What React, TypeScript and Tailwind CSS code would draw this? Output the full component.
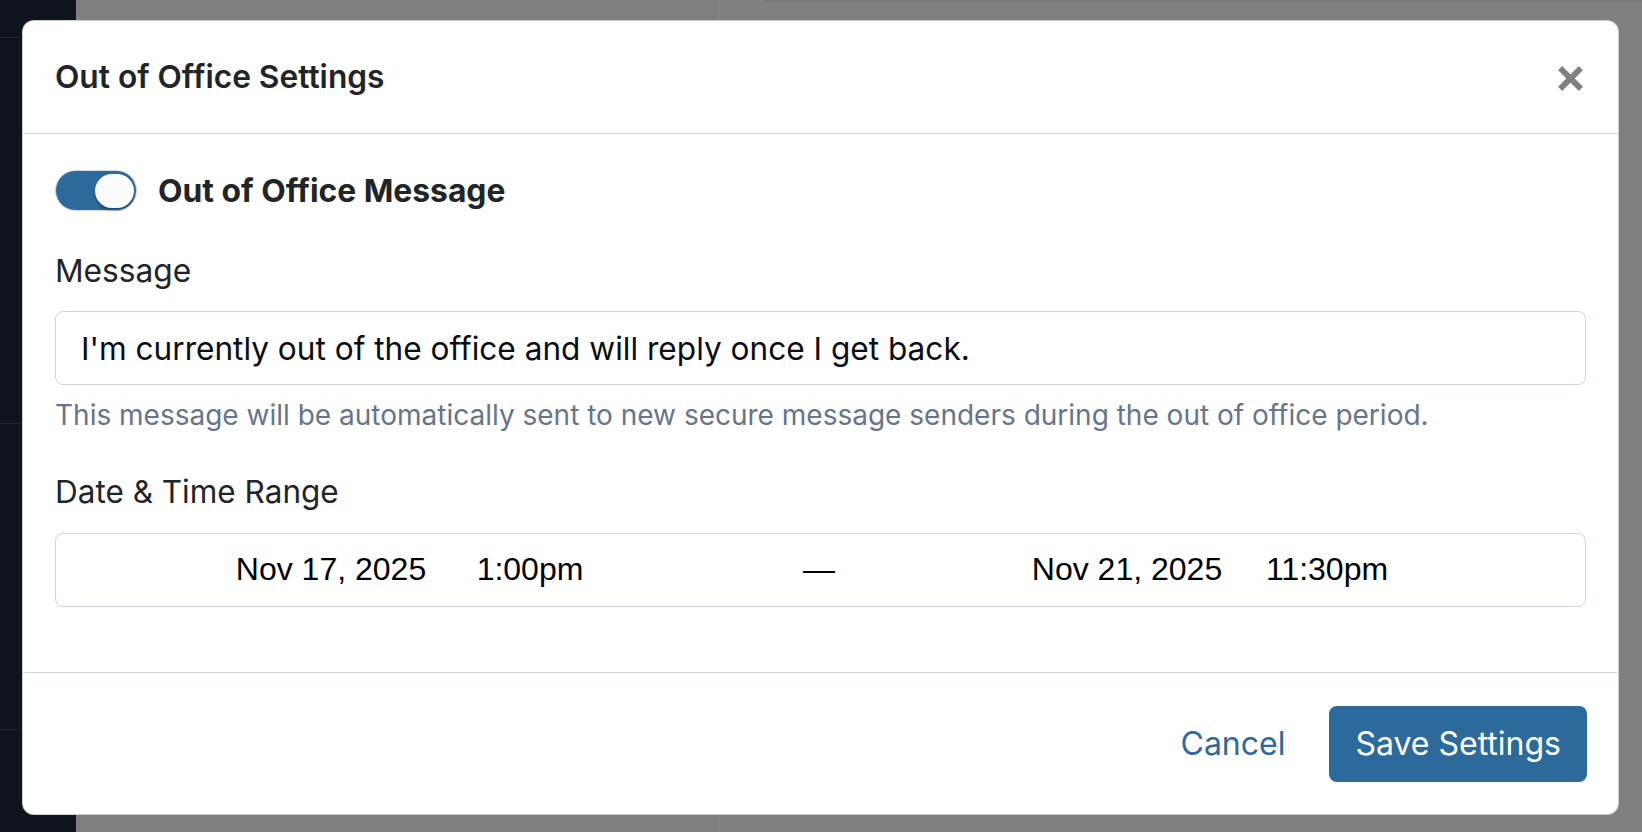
import React, { useState } from "react";

const font = { fontFamily: "Inter, 'Noto Sans', sans-serif" };

function CloseIcon() {
  return (
    <svg width="27" height="27" viewBox="0 0 26 26" aria-hidden="true">
      <path d="M3 3 L23 23 M23 3 L3 23" stroke="#808080" strokeWidth="5.5" strokeLinecap="butt" />
    </svg>
  );
}

function Toggle({ on, onChange }: { on: boolean; onChange: (v: boolean) => void }) {
  return (
    <button
      type="button"
      onClick={() => onChange(!on)}
      className={`flex h-[41px] w-[82px] items-center rounded-full border border-[#d5dbe3] px-[2px] ${
        on ? "justify-end bg-[#2d6a9c]" : "justify-start bg-white"
      }`}
    >
      <span className="h-[34px] w-[39px] rounded-full bg-[#fbfbfb] shadow-[0_3px_2px_rgba(0,0,0,0.25)]" />
    </button>
  );
}

export default function App() {
  const [enabled, setEnabled] = useState(true);

  return (
    <div className="relative flex h-[832px] w-full overflow-hidden" style={font}>
      {/* page behind the backdrop */}
      <div className="flex w-[76px] flex-col bg-[#0f131b]">
        <div className="h-[38px] border-b border-[#20242c]" />
        <div className="h-[386px] border-b border-[#20242c]" />
        <div className="h-[306px] border-b border-[#20242c]" />
      </div>
      <div className="flex flex-1 bg-[#808080]">
        <div className="w-[639px] border-r border-[#777777]" />
        <div className="flex-1 pl-[48px]">
          <div className="h-[2px] bg-[#787878]" />
        </div>
      </div>

      {/* modal */}
      <div className="absolute left-[22px] top-[20px] flex w-[1597px] flex-col rounded-[12px] border border-black/20 bg-white">
        <div className="flex h-[113px] items-center justify-between border-b border-[#cdd5e0] pl-[32px] pr-[34px]">
          <h2 className="text-[31.7px] leading-[36px] font-semibold text-[#212529]">Out of Office Settings</h2>
          <button type="button" className="mt-[3px] flex items-center">
            <CloseIcon />
          </button>
        </div>

        <div className="flex h-[539px] flex-col border-b border-[#cdd5e0] px-[32px] pt-[36px]">
          <div className="flex items-center gap-[21px]">
            <Toggle on={enabled} onChange={setEnabled} />
            <span className="text-[31.8px] leading-[36px] font-bold text-[#212529]">Out of Office Message</span>
          </div>

          <label className="mt-[42px] text-[31.7px] leading-[36px] text-[#212529]">Message</label>
          <input
            type="text"
            defaultValue="I'm currently out of the office and will reply once I get back."
            className="mt-[22px] h-[74px] w-full rounded-[8px] border border-[#cbd4df] px-[25px] text-[31.6px] text-[#0b0e14] outline-none"
          />
          <p className="mt-[14px] text-[28px] leading-[33px] text-[#66758c]">
            This message will be automatically sent to new secure message senders during the out of office period.
          </p>

          <label className="mt-[42px] text-[31.5px] leading-[36px] text-[#212529]">Date &amp; Time Range</label>
          <div
            className="mt-[23px] flex h-[74px] w-full items-center rounded-[8px] border border-[#cbd4df] pb-[2px] pl-[155px] text-[32px] text-black"
            style={{ fontFamily: "'Liberation Sans', Arial, sans-serif" }}
          >
            <span className="w-[240px] text-center">Nov 17, 2025</span>
            <span className="ml-[4px] w-[150px] text-center">1:00pm</span>
            <span className="ml-[184px] w-[60px] text-center">—</span>
            <span className="ml-[158px] w-[240px] text-center">Nov 21, 2025</span>
            <span className="ml-[5px] w-[150px] text-center">11:30pm</span>
          </div>
        </div>

        <div className="flex h-[141px] items-center justify-end pr-[31px]">
          <button type="button" className="mr-[44px] text-[32px] text-[#2d6a9c]">Cancel</button>
          <button
            type="button"
            className="h-[76px] rounded-[8px] bg-[#2d6a9c] px-[26px] text-[32px] text-white"
          >
            Save Settings
          </button>
        </div>
      </div>
    </div>
  );
}
